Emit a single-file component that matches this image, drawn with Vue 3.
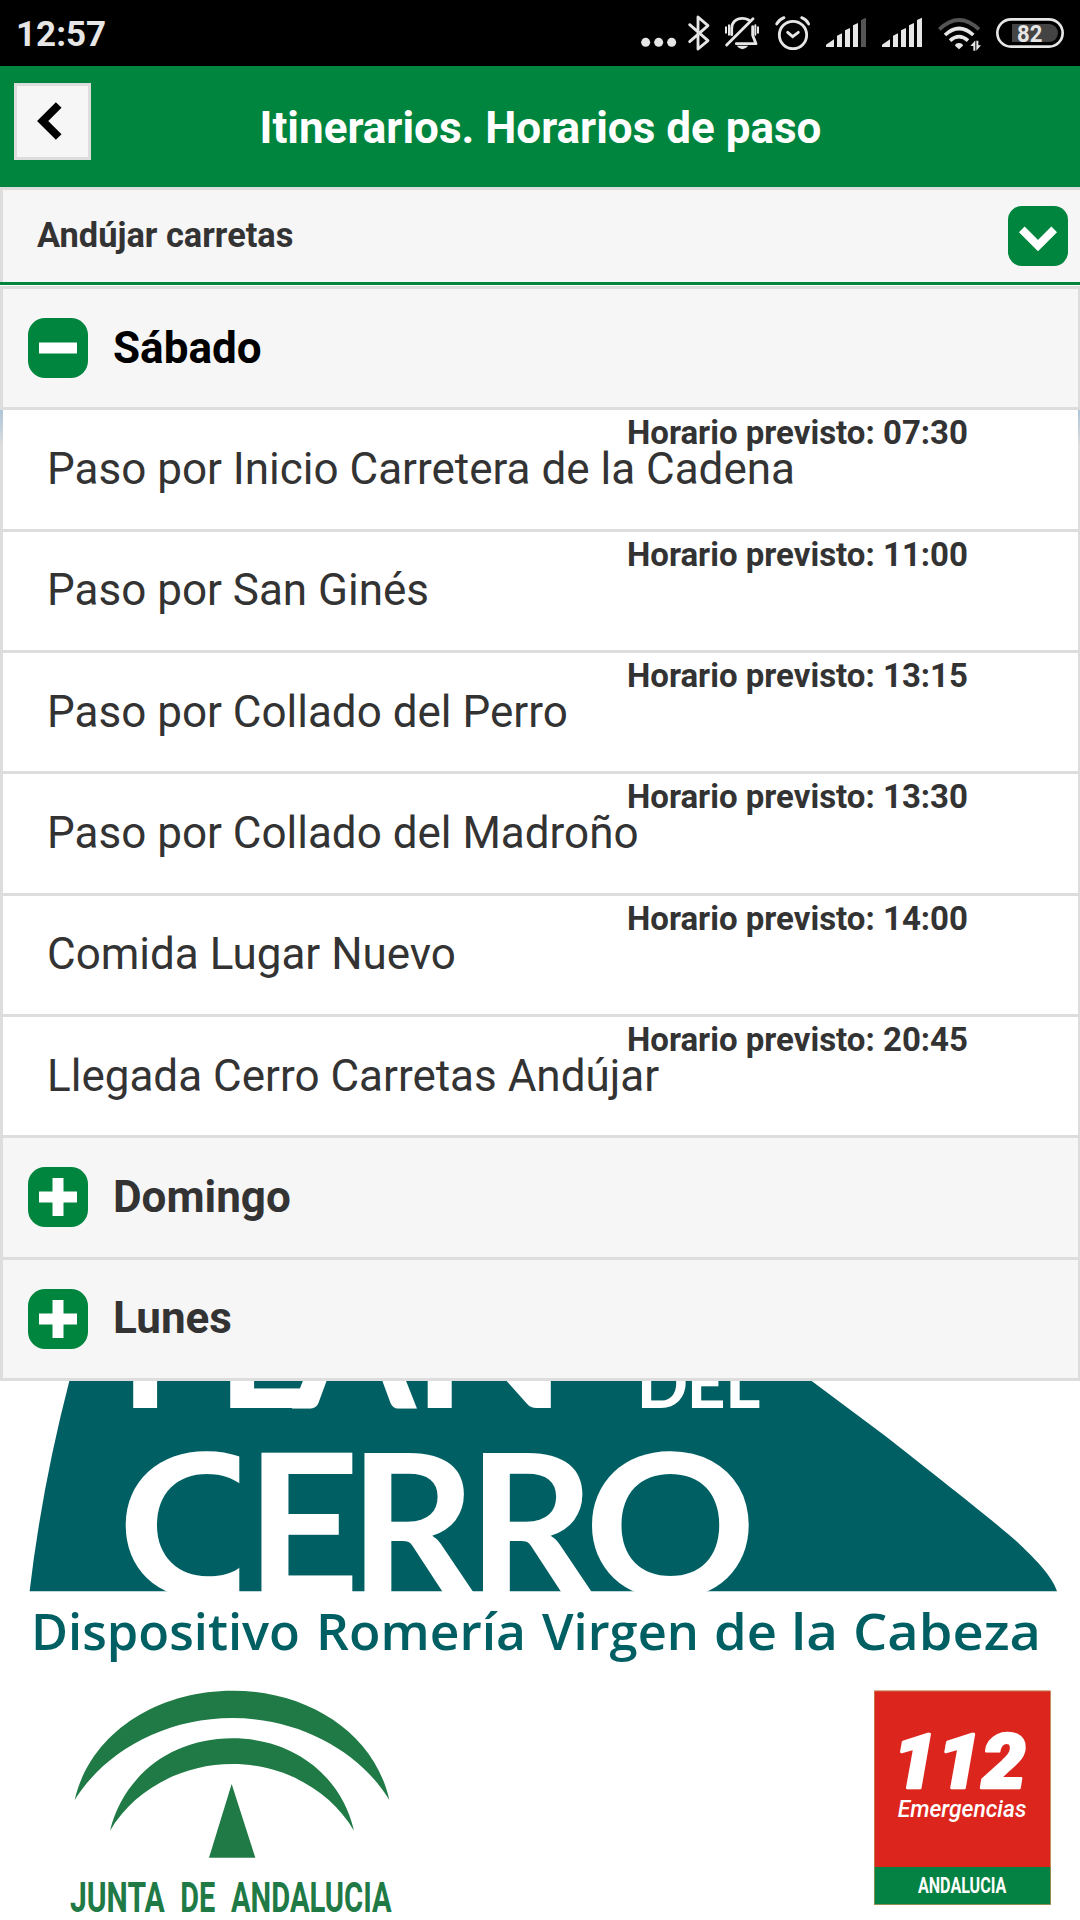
<script setup>
import { ref } from 'vue'

const stops = [
  { name: 'Paso por Inicio Carretera de la Cadena', time: '07:30' },
  { name: 'Paso por San Ginés', time: '11:00' },
  { name: 'Paso por Collado del Perro', time: '13:15' },
  { name: 'Paso por Collado del Madroño', time: '13:30' },
  { name: 'Comida Lugar Nuevo', time: '14:00' },
  { name: 'Llegada Cerro Carretas Andújar', time: '20:45' },
]
const days = ref([
  { name: 'Sábado', open: true, stops },
  { name: 'Domingo', open: false, stops: [] },
  { name: 'Lunes', open: false, stops: [] },
])
</script>

<template>
  <div class="screen">
    <div class="status">
      <span class="clock">12:57</span>
      <svg class="tray" viewBox="0 0 1380 198" width="460" height="66" fill="none" stroke="#e6e6e6">
        <g fill="#e6e6e6" stroke="none">
          <circle cx="77" cy="127" r="13.5" /><circle cx="116" cy="127" r="13.5" /><circle cx="155" cy="127" r="13.5" />
        </g>
        <path d="M209 74L264 122L234 147V51L264 77L209 125" stroke-width="8.5" stroke-linejoin="round" stroke-linecap="round" />
        <g stroke-width="8.5" stroke-linecap="round">
          <path d="M320 135L399 56" />
          <path d="M335 104V86C335 66 349 55 367 55C375 55 381 57 386 60" />
          <path d="M398 80V106L408 131H349" stroke-linejoin="round" />
          <path d="M318 82V98M327 76V104M406 76V104M414 82V98" stroke-width="6" />
          <path d="M350 137H385Q367 158 350 137Z" fill="#e6e6e6" stroke="none" />
        </g>
        <g stroke-width="8.5" stroke-linecap="round">
          <circle cx="519" cy="105" r="41" />
          <path d="M503 97L518 110L535 97" />
          <path d="M470 72Q477 59 492 53M545 53Q560 59 566 72" />
        </g>
        <g fill="#e6e6e6" stroke="none">
          <path d="M618 134L642 118V141H618ZM651 107L666 100V141H651ZM675 91L690 84V141H675ZM699 76L714 69V141H699Z" />
          <path d="M723 60L738 53V141H723Z" fill="#555" />
          <path d="M786 134L810 118V141H786ZM819 107L834 100V141H819ZM843 91L858 84V141H843ZM867 76L882 69V141H867ZM891 60L906 53V141H891Z" />
          <path d="M1005 137Q1006 129 1017 129T1029 137L1017 148Z" />
          <path d="M1065 122L1051 138H1060V152H1066V122ZM1069 122V152L1083 136H1075V122Z" />
        </g>
        <g stroke-width="11">
          <path d="M958 88Q1017 32 1077 88" stroke="#555" />
          <path d="M975 105Q1017 66 1060 105" />
          <path d="M990 122Q1017 98 1044 122" />
        </g>
        <path d="M1176 72H1288A26 27 0 0 1 1288 126H1176Z" fill="#444" stroke="none" />
        <rect x="1132" y="58" width="196" height="82" rx="41" stroke-width="8" />
        <text x="1191" y="125" class="battery" textLength="76" lengthAdjust="spacingAndGlyphs">82</text>
      </svg>
    </div>

    <header class="bar">
      <button class="back" aria-label="Volver">
        <svg viewBox="0 0 71 71" width="71" height="71" fill="none" stroke="#000" stroke-width="8">
          <path d="M41.7 19L25.7 35L41.7 51" />
        </svg>
      </button>
      <h1>Itinerarios. Horarios de paso</h1>
    </header>

    <div class="select">
      <span class="route">Andújar carretas</span>
      <svg class="badge" viewBox="0 0 60 60" width="60" height="60">
        <rect width="60" height="60" rx="14" fill="#00853e" />
        <path d="M13.8 23.3L30 39.5L46.2 23.3" fill="none" stroke="#fff" stroke-width="8" />
      </svg>
    </div>

    <div class="list">
      <template v-for="day in days" :key="day.name">
        <div class="row day" :class="{ open: day.open }">
          <svg class="badge" viewBox="0 0 60 60" width="60" height="60">
            <rect width="60" height="60" rx="17" fill="#00853e" />
            <path d="M11 24.5H49V35.5H11Z" fill="#fff" />
            <path v-if="!day.open" d="M24.5 11H35.5V49H24.5Z" fill="#fff" />
          </svg>
          <span class="day-name">{{ day.name }}</span>
        </div>
        <div v-for="(stop, i) in day.stops" :key="stop.name" class="row stop" :class="{ first: i === 0 }">
          <span class="place">{{ stop.name }}</span>
          <span class="time">Horario previsto: {{ stop.time }}</span>
        </div>
      </template>
    </div>

    <svg class="poster" viewBox="0 1381 1080 539" width="1080" height="539">
      <defs>
        <clipPath id="c-cut"><rect x="100" y="1400" width="139.3" height="230" /></clipPath>
      </defs>
      <path d="M69.6 1380Q42 1486 29.6 1591.3H1057C1052 1575 1032 1556 1017 1541.7C990 1518 930 1471 884 1435L810.3 1380Z" fill="#005f63" />
      <g class="plan">
        <text font-size="177" y="1408.3" x="119 216 293">PLA</text>
        <text font-size="177" transform="translate(411.5 1408.3) scale(1.14 1)">N</text>
        <text font-size="68" y="1408.3" x="636.5 686.5 725">DEL</text>
      </g>
      <g class="plan" font-size="199">
        <g clip-path="url(#c-cut)"><text transform="translate(117 1597.3) scale(1.14 1)">C</text></g>
        <text x="245.5 348.5 467" y="1597.3">ERR</text>
        <text transform="translate(584 1597.3) scale(1.075 1)">O</text>
      </g>
      <g class="tagline">
        <text x="31" y="1650" textLength="269" lengthAdjust="spacingAndGlyphs">Dispositivo</text>
        <text x="316" y="1650" textLength="210" lengthAdjust="spacingAndGlyphs">Romería</text>
        <text x="542" y="1650" textLength="157" lengthAdjust="spacingAndGlyphs">Virgen</text>
        <text x="714" y="1650" textLength="63" lengthAdjust="spacingAndGlyphs">de</text>
        <text x="791" y="1650" textLength="47" lengthAdjust="spacingAndGlyphs">la</text>
        <text x="853" y="1650" textLength="188" lengthAdjust="spacingAndGlyphs">Cabeza</text>
      </g>
      <g transform="translate(40 1670) scale(.33333)" fill="#207a46">
        <path d="M104 390C150 190 350 62 577 62S1004 190 1048 390C960 245 780 144 577 144S194 245 104 390Z" />
        <path d="M210 482C250 320 390 205 577 205S905 320 942 482C870 360 730 282 577 282S282 360 210 482Z" />
        <path d="M575 342L646 563H507Z" />
        <g class="junta">
          <text x="90" y="727" textLength="284" lengthAdjust="spacingAndGlyphs">JUNTA</text>
          <text x="421" y="727" textLength="105" lengthAdjust="spacingAndGlyphs">DE</text>
          <text x="573" y="727" textLength="482" lengthAdjust="spacingAndGlyphs">ANDALUCIA</text>
        </g>
      </g>
      <g transform="translate(850 1670) scale(.33333)" fill="#fff">
        <rect x="72" y="62" width="530" height="642" fill="#dc261d" />
        <rect x="72" y="591" width="530" height="113" fill="#048243" />
        <rect x="73" y="63" width="528" height="640" fill="none" stroke="#b89a5a" stroke-width="2" />
        <text class="num" x="128" y="354" textLength="400" lengthAdjust="spacingAndGlyphs">112</text>
        <text class="emer" x="143" y="442" textLength="386" lengthAdjust="spacingAndGlyphs">Emergencias</text>
        <text class="anda" x="204" y="670" textLength="265" lengthAdjust="spacingAndGlyphs">ANDALUCIA</text>
      </g>
    </svg>
  </div>
</template>

<style>
body { margin: 0; background: #fff; }
</style>

<style scoped>
.screen {
  width: 1080px;
  height: 1920px;
  overflow: hidden;
  background: #fff;
  font-family: Roboto, sans-serif;
  color: #333;
}
.status {
  height: 66px;
  background: #000;
  display: flex;
  justify-content: space-between;
  align-items: flex-start;
}
.clock {
  margin-left: 16px;
  color: #e6e6e6;
  font-size: 35px;
  font-weight: 700;
  line-height: 69px;
}
.tray { display: block; }
.battery { font: 700 72px Roboto, sans-serif; fill: #e6e6e6; stroke: none; }
.bar {
  height: 121px;
  background: #00853e;
  display: flex;
  align-items: flex-start;
}
.back {
  margin: 17px 0 0 14px;
  padding: 0;
  box-sizing: border-box;
  width: 77px;
  height: 77px;
  border: 3px solid #ddd;
  background: #f6f6f6;
}
.back svg { display: block; }
h1 {
  flex: 1;
  margin: 0 90px 0 0;
  text-align: center;
  font-size: 44px;
  line-height: 125px;
  color: #fff;
  font-weight: 700;
  white-space: nowrap;
}
.select {
  box-sizing: border-box;
  height: 98px;
  border-top: 3px solid #ddd;
  border-bottom: 3px solid #00853e;
  box-shadow: inset 3px 0 #ddd;
  background: #f6f6f6;
  margin-bottom: 1px;
  padding: 0 12px 0 37px;
  display: flex;
  justify-content: space-between;
  align-items: center;
  font-size: 34.4px;
  font-weight: 700;
}
.route { padding-bottom: 3px; }
.badge { display: block; flex: none; }
.list {
  border-bottom: 3px solid #ddd;
  height: 1092px;
}
.row {
  box-sizing: border-box;
  height: 121.333px;
  border: 3px solid #ddd;
  border-right-width: 2px;
  border-bottom: 0;
  position: relative;
  white-space: nowrap;
}
.day {
  background: #f6f6f6;
  display: flex;
  align-items: center;
  gap: 25px;
  padding-left: 25px;
  font-size: 44px;
  font-weight: 700;
}
.day-name { padding-bottom: .6px; }
.day.open { color: #000; }
.stop {
  background: #fff;
  padding-left: 44px;
  font-size: 44px;
  line-height: 118px;
}
/* Row tops fall on thirds of a pixel; this keeps every third baseline from rounding down */
.stop:nth-child(3n) { line-height: 117.3px; }
.first::before,
.first::after {
  content: "";
  position: absolute;
  top: 0;
  left: -3px;
  width: 3px;
  height: 36px;
  background: linear-gradient(#adc5da, #ddd);
}
.first::after {
  left: auto;
  right: -2px;
  width: 2px;
}
.time {
  position: absolute;
  right: 110px;
  top: 3px;
  font-size: 33px;
  line-height: 40px;
  font-weight: 700;
}
.poster { display: block; }
.plan { font-family: Lato, sans-serif; font-weight: 700; fill: #fff; }
.tagline { font: 600 51.5px "Open Sans", sans-serif; fill: #005f63; }
.junta { font: 700 130px Roboto, sans-serif; }
.num { font: italic 900 226px Roboto, sans-serif; stroke: #fff; stroke-width: 8px; stroke-linejoin: round; }
.emer { font: italic 500 70px Roboto, sans-serif; }
.anda { font: 700 68px Roboto, sans-serif; }
</style>
